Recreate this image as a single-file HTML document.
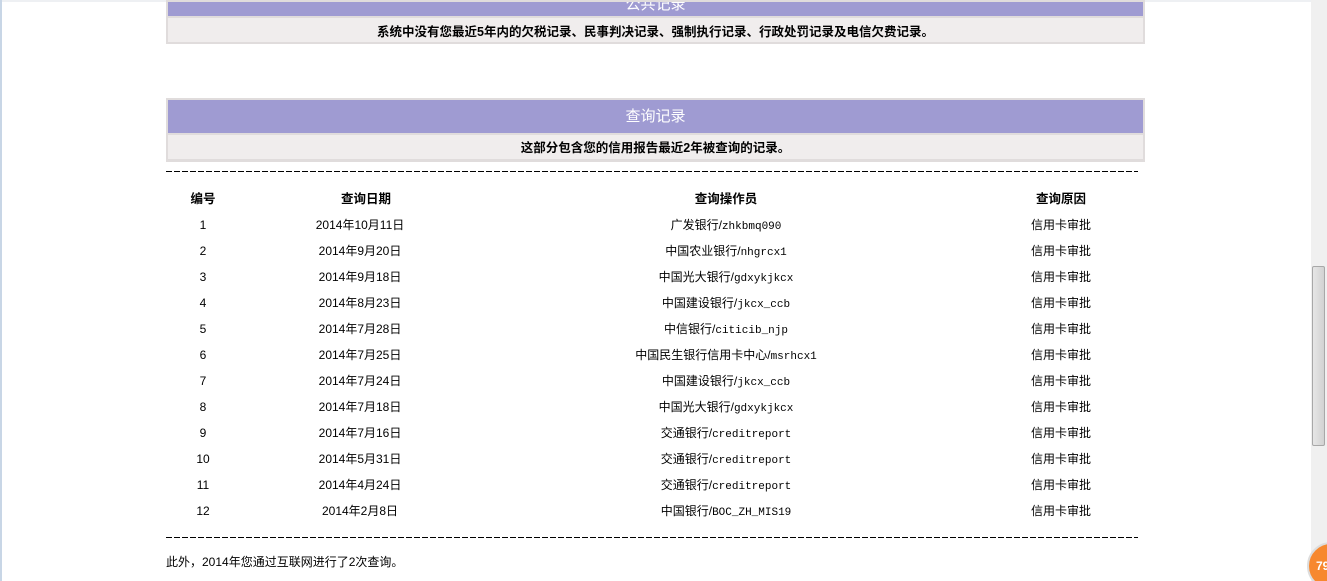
<!DOCTYPE html>
<html style="overflow:hidden"><head><meta charset="utf-8"><style>
html,body{overflow:hidden}
body{margin:0;width:1327px;height:581px;background:#fff;font-family:"Liberation Sans","Noto Sans CJK SC",sans-serif;font-size:12px;color:#000;position:relative}
.topstrip{position:absolute;left:0;top:0;width:1311px;height:2px;background:#eef0f3}
.lb{position:absolute;left:0;top:0;width:2px;height:581px;background:#c8d6e6}
.box{position:absolute;left:166px;width:975px;border:2px solid #e0dcdc;border-top:none;background:#e0dcdc}
.pur{background:#9f9bd2;color:#fff;text-align:center;font-size:15px}
.gry{background:#f0eded;text-align:center;font-weight:bold;font-size:12.5px;margin-top:2px}
.dash{position:absolute;left:166px;width:972px;height:1px;background:repeating-linear-gradient(90deg,#000 0 6px,transparent 6px 8px)}
.row{position:absolute;left:0;height:14px;line-height:14px}
.c{position:absolute;text-align:center;white-space:nowrap;transform:translateX(-50%)}
.m{font-family:"Liberation Mono",monospace;font-size:11px}
.sb{position:absolute;left:1311px;top:0;width:16px;height:581px;background:#f0f0f0}
.th{position:absolute;left:1312px;top:266px;width:13px;height:180px;background:linear-gradient(90deg,#e6e6e6,#d2d2d2);border:1px solid #a8a8a8;border-radius:2px;box-sizing:border-box}
.badge{position:absolute;left:1307px;top:542px;width:44px;height:44px;border-radius:50%;background:#f7882f;border:2px solid #ddd;color:#fff;font-weight:bold;font-size:12px;line-height:44px;text-indent:7px}
</style></head><body>
<div class="topstrip"></div><div class="lb"></div>
<div class="box" style="top:0;height:42px">
<div class="pur" style="height:14px;margin-top:2px;line-height:6px;overflow:hidden">公共记录</div>
<div class="gry" style="height:24px;line-height:28px">系统中没有您最近5年内的欠税记录、民事判决记录、强制执行记录、行政处罚记录及电信欠费记录。</div>
</div>
<div class="box" style="top:98px;height:60px;border-top:2px solid #e0dcdc">
<div class="pur" style="height:33px;line-height:33px">查询记录</div>
<div class="gry" style="height:24px;line-height:26px">这部分包含您的信用报告最近2年被查询的记录。</div>
</div>
<div class="dash" style="top:171px"></div>
<div class="row" style="top:192px;font-weight:bold;font-size:12.5px"><span class="c" style="left:203px">编号</span><span class="c" style="left:366px">查询日期</span><span class="c" style="left:726px">查询操作员</span><span class="c" style="left:1061px">查询原因</span></div>
<div class="row" style="top:218px"><span class="c" style="left:203px">1</span><span class="c" style="left:360px">2014年10月11日</span><span class="c" style="left:726px">广发银行/<span class="m">zhkbmq090</span></span><span class="c" style="left:1061px">信用卡审批</span></div>
<div class="row" style="top:244px"><span class="c" style="left:203px">2</span><span class="c" style="left:360px">2014年9月20日</span><span class="c" style="left:726px">中国农业银行/<span class="m">nhgrcx1</span></span><span class="c" style="left:1061px">信用卡审批</span></div>
<div class="row" style="top:270px"><span class="c" style="left:203px">3</span><span class="c" style="left:360px">2014年9月18日</span><span class="c" style="left:726px">中国光大银行/<span class="m">gdxykjkcx</span></span><span class="c" style="left:1061px">信用卡审批</span></div>
<div class="row" style="top:296px"><span class="c" style="left:203px">4</span><span class="c" style="left:360px">2014年8月23日</span><span class="c" style="left:726px">中国建设银行/<span class="m">jkcx_ccb</span></span><span class="c" style="left:1061px">信用卡审批</span></div>
<div class="row" style="top:322px"><span class="c" style="left:203px">5</span><span class="c" style="left:360px">2014年7月28日</span><span class="c" style="left:726px">中信银行/<span class="m">citicib_njp</span></span><span class="c" style="left:1061px">信用卡审批</span></div>
<div class="row" style="top:348px"><span class="c" style="left:203px">6</span><span class="c" style="left:360px">2014年7月25日</span><span class="c" style="left:726px">中国民生银行信用卡中心/<span class="m">msrhcx1</span></span><span class="c" style="left:1061px">信用卡审批</span></div>
<div class="row" style="top:374px"><span class="c" style="left:203px">7</span><span class="c" style="left:360px">2014年7月24日</span><span class="c" style="left:726px">中国建设银行/<span class="m">jkcx_ccb</span></span><span class="c" style="left:1061px">信用卡审批</span></div>
<div class="row" style="top:400px"><span class="c" style="left:203px">8</span><span class="c" style="left:360px">2014年7月18日</span><span class="c" style="left:726px">中国光大银行/<span class="m">gdxykjkcx</span></span><span class="c" style="left:1061px">信用卡审批</span></div>
<div class="row" style="top:426px"><span class="c" style="left:203px">9</span><span class="c" style="left:360px">2014年7月16日</span><span class="c" style="left:726px">交通银行/<span class="m">creditreport</span></span><span class="c" style="left:1061px">信用卡审批</span></div>
<div class="row" style="top:452px"><span class="c" style="left:203px">10</span><span class="c" style="left:360px">2014年5月31日</span><span class="c" style="left:726px">交通银行/<span class="m">creditreport</span></span><span class="c" style="left:1061px">信用卡审批</span></div>
<div class="row" style="top:478px"><span class="c" style="left:203px">11</span><span class="c" style="left:360px">2014年4月24日</span><span class="c" style="left:726px">交通银行/<span class="m">creditreport</span></span><span class="c" style="left:1061px">信用卡审批</span></div>
<div class="row" style="top:504px"><span class="c" style="left:203px">12</span><span class="c" style="left:360px">2014年2月8日</span><span class="c" style="left:726px">中国银行/<span class="m">BOC_ZH_MIS19</span></span><span class="c" style="left:1061px">信用卡审批</span></div>
<div class="dash" style="top:537px"></div>
<div class="row" style="top:555px;left:166px">此外，2014年您通过互联网进行了2次查询。</div>
<div class="sb"></div><div class="th"></div>
<div class="badge">79</div>
</body></html>
